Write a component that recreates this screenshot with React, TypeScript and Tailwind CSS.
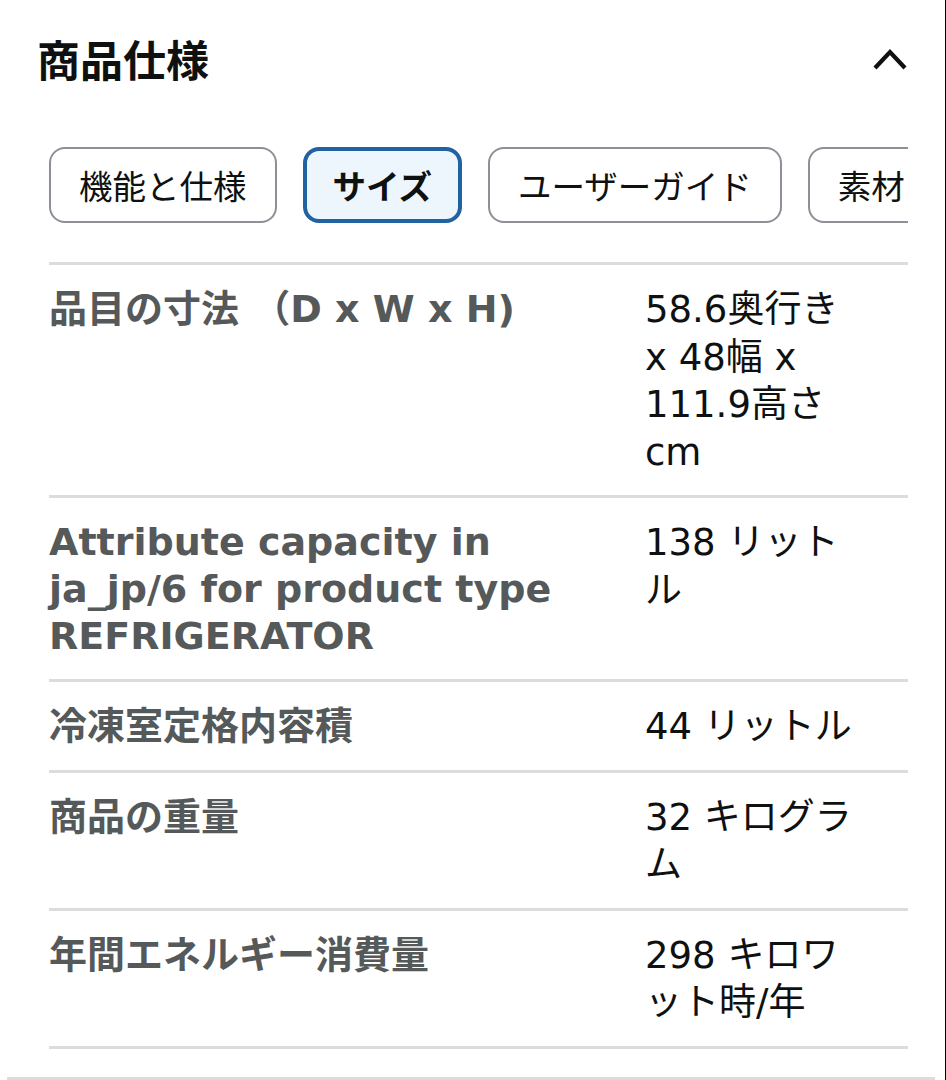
import React from "react";

const rows: { label: string[]; value: string[] }[] = [
  { label: ["品目の寸法 （D x W x H)"], value: ["58.6奥行き", "x 48幅 x", "111.9高さ", "cm"] },
  {
    label: ["Attribute capacity in", "ja_jp/6 for product type", "REFRIGERATOR"],
    value: ["138 リット", "ル"],
  },
  { label: ["冷凍室定格内容積"], value: ["44 リットル"] },
  { label: ["商品の重量"], value: ["32 キログラ", "ム"] },
  { label: ["年間エネルギー消費量"], value: ["298 キロワ", "ット時/年"] },
];

const tabs = ["機能と仕様", "サイズ", "ユーザーガイド", "素材とお手入れ"];

export default function App() {
  return (
    <div
      className="w-[946px] h-[1080px] bg-white border-r border-black overflow-hidden flex flex-col"
      style={{ fontFamily: '"Noto Sans CJK JP", "Liberation Sans", sans-serif' }}
    >
      <div className="h-[116px] flex items-center justify-between pl-[37px] pr-[38px] shrink-0">
        <h2 className="text-[43px] font-bold text-[#0f1111] leading-none">商品仕様</h2>
        <svg width="34" height="22" viewBox="0 0 34 22" fill="none" className="mt-[1px]">
          <polyline points="2,20 17,4 32,20" stroke="#0f1111" strokeWidth="4.2" strokeLinecap="butt" strokeLinejoin="miter" />
        </svg>
      </div>

      <div className="mt-[31px] ml-[49px] w-[859px] overflow-hidden shrink-0">
        <div className="flex gap-[26px] w-max">
          {tabs.map((t, i) =>
            i === 1 ? (
              <div
                key={t}
                className="h-[76px] px-[26px] flex items-center rounded-[16px] border-[4px] border-[#2162a1] bg-[#edf6fd] text-[33.5px] font-bold text-[#0f1111]"
              >
                {t}
              </div>
            ) : (
              <div
                key={t}
                className="h-[76px] px-[28px] flex items-center rounded-[16px] border-2 border-[#8d9096] bg-white text-[33.5px] text-[#0f1111]"
              >
                {t}
              </div>
            )
          )}
        </div>
      </div>

      <div className="mt-[39px] ml-[49px] w-[859px] border-t-[3px] border-[#dcdcdc] shrink-0">
        {rows.map((r) => (
          <div key={r.label.join()} className="flex pt-[21px] pb-[19px] border-b-[3px] border-[#dcdcdc]">
            <div
              className="w-[596px] text-[38px] leading-[47px] font-bold text-[#565959]"
              style={{ fontFamily: '"DejaVu Sans", "Noto Sans CJK JP", sans-serif' }}
            >
              {r.label.map((l) => (
                <div key={l} className="whitespace-nowrap">
                  {l}
                </div>
              ))}
            </div>
            <div
              className="w-[222px] text-[37px] leading-[47.5px] text-[#0f1111]"
              style={{ fontFamily: '"DejaVu Sans", "Noto Sans CJK JP", sans-serif' }}
            >
              {r.value.map((l) => (
                <div key={l} className="whitespace-nowrap">
                  {l}
                </div>
              ))}
            </div>
          </div>
        ))}
      </div>

      <div className="mt-[28px] ml-[7px] w-[928px] h-[3px] bg-[#dcdcdc] shrink-0" />
    </div>
  );
}
